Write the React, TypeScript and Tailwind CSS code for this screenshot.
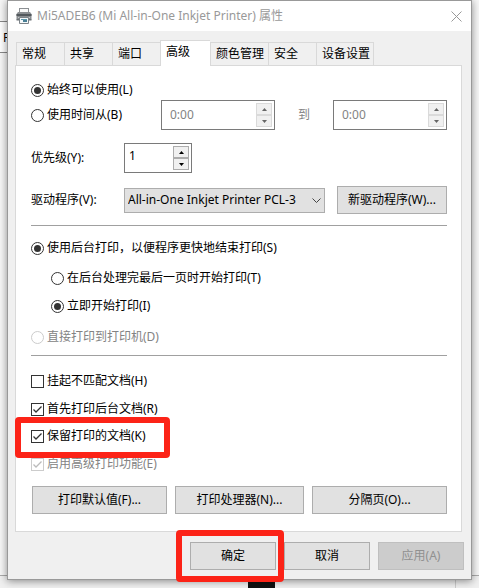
import { clsx } from 'clsx';
import React from 'react';

const TABS = [
  { label: '常规' },
  { label: '共享' },
  { label: '端口' },
  { label: '高级', active: true },
  { label: '颜色管理', wide: true },
  { label: '安全' },
  { label: '设备设置', wide: true },
];

const PrinterIcon = () => (
  <svg width="16" height="16" viewBox="0 0 16 16" aria-hidden="true">
    <rect x="3.5" y="0.5" width="9" height="5" fill="#fafafa" stroke="#8b8f92" />
    <path d="M2 4h12l1.5 2v5.5H.5V6z" fill="#8a8e91" />
    <path d="M.5 6h15v2H.5z" fill="#53595d" />
    <path d="M.5 11h15v1.5H.5z" fill="#6d7276" />
    <path d="M2 9h12v1H2z" fill="#c3c7c9" />
    <path d="M3.5 9.5h9v6h-9z" fill="#f4f8fa" stroke="#7c8388" />
    <path d="M5 11h6v1H5z" fill="#5c98ad" />
    <path d="M7 12h4v2H7z" fill="#487f95" />
  </svg>
);

interface SpinnerProps {
  label: string;
  value: string;
  disabled?: boolean;
  className?: string;
}

const Spinner = ({ label, value, disabled, className }: SpinnerProps) => (
  <div className={clsx('flex h-[30px] shrink-0 border border-[#7a7a7a] bg-white p-0.5', className)}>
    <input
      type="text"
      aria-label={label}
      defaultValue={value}
      disabled={disabled}
      className={clsx(
        'w-0 min-w-0 flex-1 bg-transparent outline-none',
        disabled ? 'pl-1.5 text-[#838383]' : 'pb-1 pl-0.5 text-black'
      )}
    />
    <div className="flex w-4 flex-col">
      {['M0 3h5L2.5 0z', 'M0 0h5L2.5 3z'].map((d, i) => (
        <button
          key={d}
          type="button"
          disabled={disabled}
          aria-label={i === 0 ? `${label} +` : `${label} -`}
          className={clsx(
            'flex flex-1 items-center justify-center border bg-[#f0f0f0]',
            disabled ? 'border-[#dadada] text-[#666]' : 'border-[#acacac] text-black'
          )}
        >
          <svg width="5" height="3" viewBox="0 0 5 3">
            <path d={d} fill="currentColor" />
          </svg>
        </button>
      ))}
    </div>
  </div>
);

interface OptionProps {
  label: string;
  checked?: boolean;
  disabled?: boolean;
  className?: string;
}

const Radio = ({ label, name, checked, disabled, className }: OptionProps & { name: string }) => (
  <label className={clsx('flex h-4 items-center gap-[3px]', disabled && 'text-[#838383]', className)}>
    <input
      type="radio"
      name={name}
      defaultChecked={checked}
      disabled={disabled}
      className="flex size-[13px] shrink-0 appearance-none items-center justify-center rounded-full border border-[#333] bg-white before:size-[7px] before:rounded-full checked:before:bg-[#333] disabled:border-[#ccc]"
    />
    <span className="whitespace-nowrap">{label}</span>
  </label>
);

const Checkbox = ({ label, checked, disabled, className }: OptionProps) => (
  <label className={clsx('flex h-4 items-center gap-[3px]', disabled && 'text-[#838383]', className)}>
    <span className="relative flex size-[13px] shrink-0">
      <input
        type="checkbox"
        defaultChecked={checked}
        disabled={disabled}
        className="peer size-[13px] appearance-none border border-[#333] bg-white disabled:border-[#ccc]"
      />
      <svg
        className="pointer-events-none absolute inset-0 hidden text-[#333] peer-checked:block peer-disabled:text-[#bbb]"
        width="13"
        height="13"
        viewBox="0 0 13 13"
      >
        <path d="M2.5 6.5L5 9l5.5-5.5" fill="none" stroke="currentColor" strokeWidth="1.3" />
      </svg>
    </span>
    <span className="whitespace-nowrap">{label}</span>
  </label>
);

const Button = ({ children, disabled, className }: { children: React.ReactNode; disabled?: boolean; className?: string }) => (
  <button
    type="button"
    disabled={disabled}
    className={clsx(
      'h-7 whitespace-nowrap border',
      disabled ? 'border-[#bfbfbf] bg-[#ccc] text-[#909090]' : 'border-[#adadad] bg-[#e1e1e1] text-black',
      className
    )}
  >
    {children}
  </button>
);

// Hand-drawn style red marker around a control
const Highlight = ({ className }: { className: string }) => (
  <div className={clsx('pointer-events-none absolute z-10 rounded border-6 border-[#fc2317]', className)} />
);

export default function App() {
  return (
    <div className="relative min-h-screen overflow-hidden bg-[#f7f7f7] px-[7px] pb-2 font-['Noto_Sans','Noto_Sans_CJK_SC',sans-serif] text-xs leading-4 text-black">
      {/* Windows behind the dialog */}
      <div className="absolute left-0 top-[21px] h-8 w-4 border-y border-[#888] bg-white pl-[3px] pt-2">F</div>
      <div className="absolute inset-x-0 bottom-0 h-[13px] border-t border-[#aaa] bg-[#f0f0f0]" />
      <div className="absolute bottom-0 left-[248px] h-3 w-[27px] bg-[#111]" />
      <div className="absolute bottom-0 right-[8px] h-3 w-4 border-l border-[#ccc]" />

      <div className="relative border border-[#999] bg-[#f0f0f0] shadow-[0_1px_8px_rgba(0,0,0,0.45)]">
        <header className="flex h-[30px] items-center bg-white pl-2 pr-[9px] text-[#999]">
          <PrinterIcon />
          <h1 className="ml-[5px] flex-1 whitespace-nowrap">Mi5ADEB6 (Mi All-in-One Inkjet Printer) 属性</h1>
          <button type="button" aria-label="关闭">
            <svg width="11" height="11" viewBox="0 0 11 11">
              <path d="M.5.5l10 10M10.5.5l-10 10" fill="none" stroke="currentColor" />
            </svg>
          </button>
        </header>

        <main className="px-[7px] pb-[9px] pt-[9px]">
          <div role="tablist" className="flex items-end pl-px">
            {TABS.map(({ label, active, wide }) => (
              <button
                key={label}
                type="button"
                role="tab"
                aria-selected={!!active}
                className={clsx(
                  'whitespace-nowrap border-l border-t border-[#d9d9d9] px-[5px] text-left last:border-r',
                  wide ? 'w-[58px]' : active ? 'w-[50px]' : 'w-12',
                  active ? 'relative -mb-px h-[26px] bg-white pb-1' : 'h-[23px]'
                )}
              >
                {label}
              </button>
            ))}
          </div>

          <section role="tabpanel" className="mr-0.5 border border-[#d9d9d9] bg-white pb-[17px] pl-[15px] pr-[14px] pt-4">
            <Radio name="availability" label="始终可以使用(L)" checked />
            <div className="mt-0.5 flex items-center">
              <Radio name="availability" label="使用时间从(B)" className="w-[130px]" />
              <Spinner label="开始时间" value="0:00" disabled className="w-[114px]" />
              <span className="flex-1 text-center text-[#838383]">到</span>
              <Spinner label="结束时间" value="0:00" disabled className="w-[114px]" />
            </div>
            <div className="mt-[13px] flex items-center">
              <span className="w-[93px]">优先级(Y):</span>
              <Spinner label="优先级" value="1" className="w-[68px]" />
            </div>
            <div className="mt-[13px] flex items-center">
              <label htmlFor="driver" className="w-[93px] shrink-0">驱动程序(V):</label>
              <div className="relative mr-3 min-w-0 flex-1">
                <select
                  id="driver"
                  className="block h-[25px] w-full appearance-none border border-[#adadad] bg-[#e1e1e1] pl-[3px] pr-5"
                >
                  <option>All-in-One Inkjet Printer PCL-3</option>
                </select>
                <svg className="pointer-events-none absolute right-1 top-[10px]" width="9" height="6" viewBox="0 0 9 6">
                  <path d="M.5.5l4 4 4-4" fill="none" stroke="#444" />
                </svg>
              </div>
              <Button className="w-[110px]">新驱动程序(W)...</Button>
            </div>

            <hr className="mt-[11px] border-[#a0a0a0]" />
            <Radio name="spool" label="使用后台打印，以便程序更快地结束打印(S)" checked className="mt-[14px]" />
            <Radio name="start" label="在后台处理完最后一页时开始打印(T)" className="ml-5 mt-[14px]" />
            <Radio name="start" label="立即开始打印(I)" checked className="ml-5 mt-3" />
            <Radio name="spool" label="直接打印到打印机(D)" disabled className="mt-[15px]" />

            <hr className="mt-[10px] border-[#a0a0a0]" />
            <Checkbox label="挂起不匹配文档(H)" className="mt-[17px]" />
            <Checkbox label="首先打印后台文档(R)" checked className="mt-3" />
            <div className="relative mt-[11px]">
              <Checkbox label="保留打印的文档(K)" checked />
              <Highlight className="-left-4 -top-[11px] h-[41px] w-[155px]" />
            </div>
            <Checkbox label="启用高级打印功能(E)" checked disabled className="mt-3" />

            <div className="ml-px mt-[14px] flex gap-2">
              <Button className="w-[135px]">打印默认值(F)...</Button>
              <Button className="flex-1">打印处理器(N)...</Button>
              <Button className="w-[135px]">分隔页(O)...</Button>
            </div>
          </section>

          <footer className="mt-[10px] flex justify-end gap-2">
            <div className="relative flex">
              <Button className="w-[86px]">确定</Button>
              <Highlight className="-inset-y-3 -left-[14px] -right-2" />
            </div>
            <Button className="w-[86px]">取消</Button>
            <Button disabled className="w-[86px]">应用(A)</Button>
          </footer>
        </main>
      </div>
    </div>
  );
}
